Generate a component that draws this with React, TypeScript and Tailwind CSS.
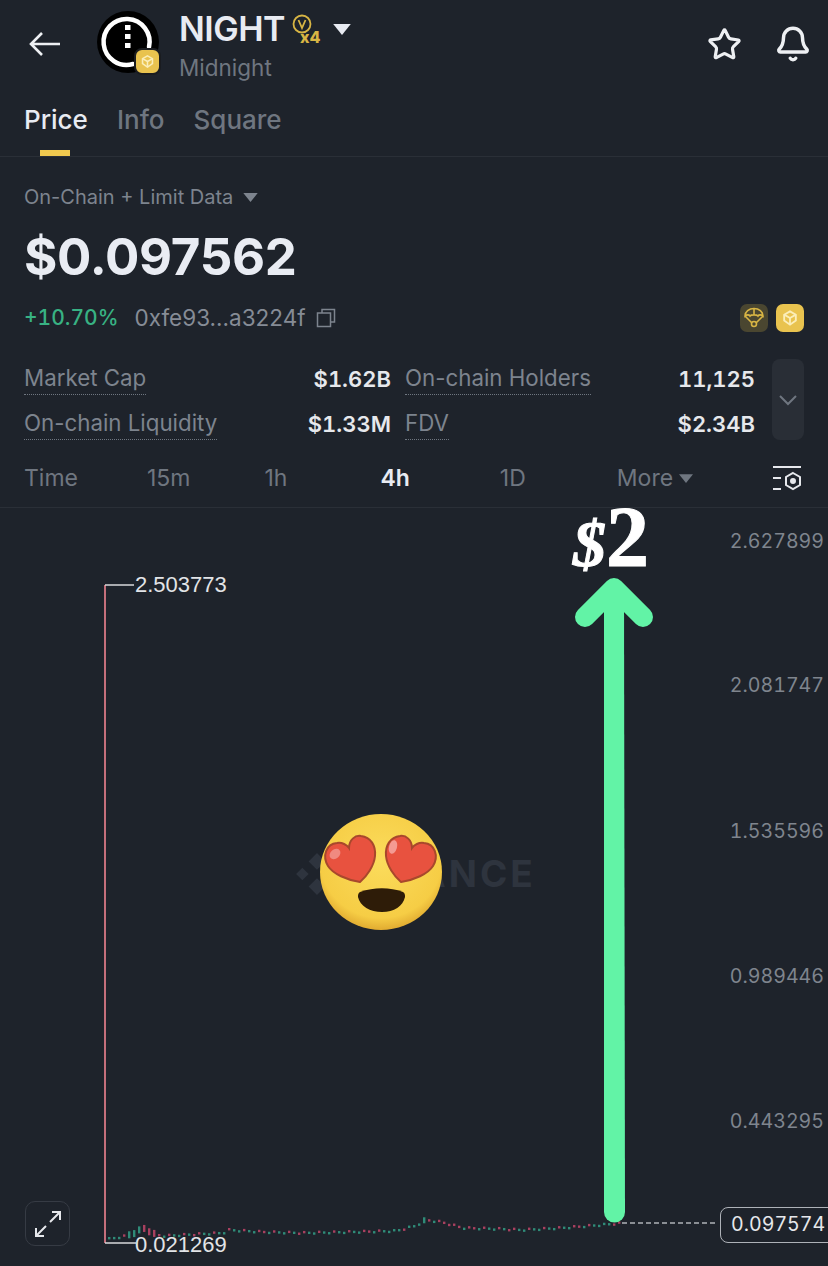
import { Bell, Star } from "lucide-react";

const trail: [number, number][] = [
  [108, 1239], [125, 1236], [135, 1232], [144, 1228], [152, 1234], [162, 1236], [200, 1234],
  [222, 1233], [228, 1230], [262, 1232], [300, 1233], [350, 1232], [395, 1231], [414, 1226],
  [425, 1220], [440, 1222], [462, 1228], [500, 1229], [520, 1230], [560, 1228], [600, 1225], [622, 1223],
];

function priceAt(x: number) {
  for (let i = 1; i < trail.length; i++) {
    const [x0, y0] = trail[i - 1];
    const [x1, y1] = trail[i];
    if (x <= x1) return y0 + ((y1 - y0) * (x - x0)) / (x1 - x0);
  }
  return 1223;
}

const candles = Array.from({ length: 103 }, (_, i) => {
  const x = 108 + i * 5;
  const y = priceAt(x) + ((i * 7) % 3) * 0.8 - 0.8;
  const next = priceAt(x + 5);
  const red = next > y + 0.4 || i % 7 === 3;
  const tall = x > 125 && x < 155;
  return { x, y, h: tall ? 7 : x > 420 && x < 428 ? 6 : 2.4, red };
});

function Caret({ className }: { className: string }) {
  return (
    <svg viewBox="0 0 16 10" className={className}>
      <path d="M0 0h16L8 10z" fill="currentColor" />
    </svg>
  );
}

function CubeMark({ size, color }: { size: number; color: string }) {
  return (
    <svg width={size} height={size} viewBox="0 0 24 24" fill="none" stroke={color} strokeWidth="2.2">
      <path d="M12 4l7 4v7l-7 5-7-5V8z" />
      <path d="M5 8l7 4 7-4M12 12v8" />
    </svg>
  );
}

function CoinLogo() {
  return (
    <div className="relative h-[62px] w-[62px] shrink-0 rounded-full bg-black">
      <svg viewBox="0 0 62 62" className="h-[62px] w-[62px]">
        <path d="M52 36A23 23 0 1 0 36 53" fill="none" stroke="white" strokeWidth="4.5" strokeLinecap="round" />
        <rect x="28" y="14" width="5.5" height="5" fill="white" />
        <rect x="28" y="23" width="5.5" height="5" fill="white" />
        <rect x="28" y="32" width="5.5" height="5" fill="white" />
      </svg>
      <div className="absolute left-[37px] top-[37px] flex h-[27px] w-[27px] items-center justify-center rounded-[8px] border-2 border-[#1a1c20] bg-[#e9c34f]">
        <CubeMark size={17} color="#fbeeb9" />
      </div>
    </div>
  );
}

function StatLabel({ text }: { text: string }) {
  return <span className="border-b border-dotted border-[#6f7680] pb-[1px] text-[22.3px] text-[#7d848e]">{text}</span>;
}

function Stat({ label, value, width }: { label: string; value: string; width: string }) {
  return (
    <div className={`flex items-center justify-between ${width}`}>
      <StatLabel text={label} />
      <span className="font-semibold tabular-nums text-[#e6e8ec]">{value}</span>
    </div>
  );
}

function Emoji() {
  const heart = "M41 70C28 68 14 62 9 54C3 44 7 32 18 31C23 30 28 33 30 36C30 28 36 23 42 24C52 25 57 34 56 44C55 54 48 64 41 70z";
  return (
    <svg viewBox="0 0 124 120" className="absolute left-[319px] top-[304px] h-[120px] w-[124px]">
      <defs>
        <radialGradient id="face" cx="50%" cy="40%" r="62%">
          <stop offset="0%" stopColor="#fbdc5c" />
          <stop offset="80%" stopColor="#f6cd45" />
          <stop offset="100%" stopColor="#dda52d" />
        </radialGradient>
      </defs>
      <ellipse cx="62" cy="60" rx="61" ry="58" fill="url(#face)" />
      <path d={heart} fill="#e8523f" stroke="#a8482c" strokeWidth="2" />
      <path d={heart} fill="#e8523f" stroke="#a8482c" strokeWidth="2" transform="matrix(-1 0 0 1 123 0)" />
      <ellipse cx="16" cy="42" rx="6" ry="4.5" fill="#f08a80" transform="rotate(-40 16 42)" />
      <ellipse cx="74" cy="35" rx="4" ry="7" fill="#f49a92" transform="rotate(15 74 35)" />
      <path d="M41 80c14-5 30-5 43 0 2 1 2 3 2 5-2 9-11 15-23 15s-22-6-24-15c0-2 0-4 2-5z" fill="#2e1c08" />
    </svg>
  );
}

function Chart() {
  const axis = [
    { v: "2.627899", y: 33 },
    { v: "2.081747", y: 177 },
    { v: "1.535596", y: 323 },
    { v: "0.989446", y: 468 },
    { v: "0.443295", y: 613 },
  ];
  return (
    <div className="relative h-[758px] font-['Liberation_Sans',sans-serif]">
      {/* watermark sits under the emoji */}
      <div className="absolute left-[294px] top-[338px] flex items-center gap-[6px] text-[#2e343e]">
        <svg width="46" height="46" viewBox="0 0 44 44" fill="currentColor">
          <path d="M22 2l8 8-8 8-8-8zM8 16l6 6-6 6-6-6zM36 16l6 6-6 6-6-6zM22 26l8 8-8 8-8-8z" />
        </svg>
        <span className="font-['Inter',sans-serif] text-[37px] font-bold tracking-[3px]">BINANCE</span>
      </div>

      <svg viewBox="0 508 828 758" className="absolute left-0 top-0 h-[758px] w-[828px]">
        <path d="M105 585V1243" stroke="#c46f7b" strokeWidth="2" />
        <path d="M105 585H134" stroke="#d8dadd" strokeWidth="1.5" />
        <path d="M105 1243H136" stroke="#d8dadd" strokeWidth="1.5" />
        {candles.map((c) => (
          <rect key={c.x} x={c.x} y={c.y - c.h / 2} width="2.4" height={c.h} fill={c.red ? "#a8405f" : "#2f8b78"} />
        ))}
        <path d="M622 1223H716" stroke="#aeb2b8" strokeWidth="1.3" strokeDasharray="5 3" />
        <path d="M604 595H624L625 1212a10.5 10.5 0 0 1-21 0z" fill="#62f3a6" />
        <path d="M585 617l29-29 29 29" fill="none" stroke="#62f3a6" strokeWidth="20" strokeLinecap="round" strokeLinejoin="round" />
      </svg>

      <div className="absolute left-[573px] top-[-7px] flex items-baseline font-['Liberation_Serif',serif] font-bold leading-[72px] text-white [-webkit-text-stroke:1px_white]">
        <span className="text-[66px] italic">$</span>
        <span className="text-[86px]">2</span>
      </div>

      {axis.map((a) => (
        <span
          key={a.v}
          style={{ top: a.y - 14 }}
          className="absolute right-[4px] font-['Inter',sans-serif] text-[19.6px] leading-[28px] tabular-nums text-[#7f858e]"
        >
          {a.v}
        </span>
      ))}

      <span className="absolute left-[135px] top-[64px] text-[22px] leading-[26px] text-[#e2e4e7]">2.503773</span>
      <span className="absolute left-[135px] top-[724px] text-[22px] leading-[26px] text-[#e2e4e7]">0.021269</span>

      <div className="absolute left-[720px] top-[699px] flex h-[36px] w-[120px] items-center rounded-[8px] border border-[#aeb2b8] bg-[#1e232b] pl-[10px] font-['Inter',sans-serif] text-[19.6px] tabular-nums text-[#e6e8ec]">
        0.097574
      </div>

      <div className="absolute left-[25px] top-[693px] flex h-[45px] w-[45px] items-center justify-center rounded-[10px] border border-[#363b44]">
        <svg width="30" height="30" viewBox="0 0 30 30" fill="none" stroke="#e6e8ec" strokeWidth="2">
          <path d="M17 13l10-10M19 3h8v8M13 17L3 27M3 19v8h8" />
        </svg>
      </div>

      <Emoji />
    </div>
  );
}

export default function App() {
  return (
    <div className="h-[1266px] w-[828px] overflow-hidden bg-[#1e232b] font-['Inter',sans-serif]">
      <header className="flex h-[94px] items-center pl-[28px] pr-[16px]">
        <svg width="32" height="26" viewBox="0 0 32 26" fill="none" stroke="#eef0f3" strokeWidth="2.6" className="mb-[6px] shrink-0">
          <path d="M14 2L3 13l11 11M3 13h29" />
        </svg>
        <div className="mb-[10px] ml-[37px]">
          <CoinLogo />
        </div>
        <div className="ml-[20px] self-start pt-[10px]">
          <div className="flex items-center">
            <span className="text-[34px] font-semibold leading-[38px] tracking-[-0.5px] text-[#e8ebf2]">NIGHT</span>
            <div className="relative ml-[7px] h-[30px] w-[30px] text-[#d8b544]">
              <svg width="20" height="20" viewBox="0 0 20 20" fill="none" stroke="currentColor" strokeWidth="1.8">
                <circle cx="10" cy="10" r="8.5" />
                <path d="M6.5 6l3.5 8 3.5-8" />
              </svg>
              <span className="absolute left-[8px] top-[15px] text-[16px] font-extrabold leading-[16px]">x4</span>
            </div>
            <Caret className="ml-[11px] h-[11px] w-[18px] text-[#e8ebf2]" />
          </div>
          <div className="mt-[8px] text-[22.5px] leading-[24px] text-[#6f7680]">Midnight</div>
        </div>
        <div className="mb-[6px] ml-auto flex items-center gap-[32px] text-[#eef0f3]">
          <Star size={35} strokeWidth={2.2} />
          <Bell size={38} strokeWidth={2.2} />
        </div>
      </header>

      <nav className="flex h-[63px] gap-[29px] border-b border-[#2a2f37] pl-[24px] text-[26px] font-medium leading-[52px] text-[#6f7680]">
        <div className="relative text-[#e8ebf2]">
          Price
          <div className="absolute bottom-0 left-[16px] h-[6px] w-[30px] bg-[#f0c94f]" />
        </div>
        <span>Info</span>
        <span>Square</span>
      </nav>

      <section className="px-[24px] pt-[26px]">
        <div className="flex items-center text-[20px] leading-[28px] text-[#7d848e]">
          On-Chain + Limit Data
          <Caret className="ml-[10px] h-[9px] w-[15px]" />
        </div>
        <div className="mt-[16px] text-[51px] font-bold leading-[60px] tracking-[-0.3px] text-[#e9ecf3]">$0.097562</div>
        <div className="mt-[17px] flex items-center text-[21px] leading-[28px]">
          <span className="font-medium tabular-nums text-[#38b283]">+10.70%</span>
          <span className="ml-[16px] text-[22.5px] text-[#868c96]">0xfe93...a3224f</span>
          <svg width="20" height="20" viewBox="0 0 20 20" fill="none" stroke="#7d848e" strokeWidth="1.5" className="ml-[10px]">
            <path d="M6 5V1.5h12.5V14H15" />
            <rect x="1.5" y="5" width="13" height="13.5" />
          </svg>
          <div className="ml-auto flex gap-[8px]">
            <div className="flex h-[28px] w-[28px] items-center justify-center rounded-[7px] bg-[#4a4630]">
              <svg width="22" height="22" viewBox="0 0 22 22" fill="none" stroke="#d8b544" strokeWidth="1.6">
                <path d="M2 9a9 7.5 0 0 1 18 0c-2-1.5-4-1.5-5 0-1-1.5-7-1.5-8 0-1-1.5-3-1.5-5 0zM2 9l7 7M20 9l-7 7M11 2v6" />
                <circle cx="11" cy="17" r="2.5" />
              </svg>
            </div>
            <div className="flex h-[28px] w-[28px] items-center justify-center rounded-[7px] bg-[#e9c34f]">
              <CubeMark size={20} color="#fbeeb9" />
            </div>
          </div>
        </div>

        <div className="mt-[27px] flex text-[22px] leading-[30px]">
          <div className="flex w-[731px] flex-col gap-[13px] pt-[4px]">
            <div className="flex gap-[14px]">
              <Stat label="Market Cap" value="$1.62B" width="w-[367px]" />
              <Stat label="On-chain Holders" value="11,125" width="w-[350px]" />
            </div>
            <div className="flex gap-[14px]">
              <Stat label="On-chain Liquidity" value="$1.33M" width="w-[367px]" />
              <Stat label="FDV" value="$2.34B" width="w-[350px]" />
            </div>
          </div>
          <div className="ml-[17px] flex h-[81px] w-[32px] items-center justify-center rounded-[8px] bg-[#292e36]">
            <svg width="20" height="12" viewBox="0 0 20 12" fill="none" stroke="#6f7680" strokeWidth="2">
              <path d="M2 2l8 8 8-8" />
            </svg>
          </div>
        </div>
      </section>

      <div className="mt-[19px] flex h-[49px] items-center border-b border-[#2a2f37] pb-[9px] pl-[24px] text-[23px] text-[#6f7680]">
        <span>Time</span>
        <span className="ml-[69px]">15m</span>
        <span className="ml-[74px]">1h</span>
        <span className="ml-[93px] font-semibold text-[#e8ebf2]">4h</span>
        <span className="ml-[90px]">1D</span>
        <span className="ml-[91px]">More</span>
        <Caret className="ml-[6px] h-[9px] w-[14px]" />
        <svg width="30" height="28" viewBox="0 0 30 28" fill="none" stroke="#e6e8ec" strokeWidth="2" className="ml-[79px]">
          <path d="M1 2h28M1 13h8M1 24h8" />
          <path d="M21 8l7 4v8l-7 4-7-4v-8z" />
          <circle cx="21" cy="16" r="2" fill="#e6e8ec" />
        </svg>
      </div>

      <Chart />
    </div>
  );
}
